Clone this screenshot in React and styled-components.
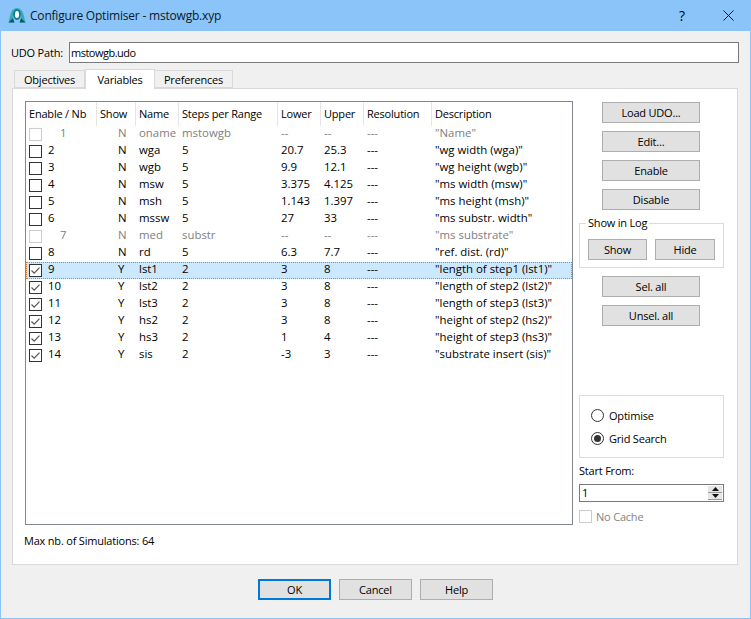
import React from 'react';
import styled, { createGlobalStyle } from 'styled-components';

const Global = createGlobalStyle`
  html, body { margin: 0; padding: 0; background: #f0f0f0; }
  * { box-sizing: border-box; }
  body { font-family: "Open Sans", "Noto Sans", "Liberation Sans", sans-serif; font-size: 11px; letter-spacing: -0.2px; color: #000; }
`;

const Win = styled.div`
  width: 751px; height: 619px; display: flex; flex-direction: column;
  background: #f0f0f0; border: 1px solid #8ac4f8; border-top: 0;
  overflow: hidden;
`;
const TitleBar = styled.div`
  height: 31px; flex: none; background: #8ac4f8; display: flex; align-items: center;
  padding: 0 0 0 8px; margin: 0 -1px;
`;
const TitleText = styled.div`
  font-size: 12px; margin-left: 4px; flex: 1; color: #0c1a26; padding-bottom: 1px;
`;
const HelpMark = styled.div`
  width: 46px; text-align: center; font-size: 14px;
`;
const CloseBox = styled.div`
  width: 46px; height: 31px; display: flex; align-items: center; justify-content: center;
`;
const Content = styled.div`
  flex: 1; display: flex; flex-direction: column; padding: 11px 11px 0 11px;
`;
const PathRow = styled.div`
  display: flex; align-items: center; height: 21px; margin-left: -1px;
`;
const PathLabel = styled.div` width: 58px; flex: none; `;
const PathInput = styled.div`
  flex: 1; height: 21px; background: #fff; border: 1px solid #7a7a7a; padding: 0 1px; line-height: 19px; letter-spacing: -0.5px;
`;
const Tabs = styled.div`
  display: flex; height: 20px; margin: 5px 0 0 2px; align-items: flex-end; position: relative; z-index: 1;
`;
const Tab = styled.div`
  height: ${p => p.$active ? 20 : 18}px; width: ${p => p.$w}px; text-align: center;
  border: 1px solid #d9d9d9; border-left-width: ${p => p.$first || p.$active ? 1 : 0}px;
  border-bottom: ${p => p.$active ? '0' : '1px solid #d9d9d9'};
  background: ${p => p.$active ? '#fff' : '#f0f0f0'};
  line-height: ${p => p.$active ? 19 : 17}px;
  margin-bottom: ${p => p.$active ? -1 : 0}px;
`;
const Panel = styled.div`
  width: 726px; height: 477px; background: #fff; border: 1px solid #d9d9d9;
  display: flex; padding: 12px 0 0 12px;
`;
const LeftCol = styled.div` width: 549px; flex: none; display: flex; flex-direction: column; `;
const Table = styled.div`
  width: 548px; height: 424px; border: 1px solid #828790; background: #fff;
`;
const COLS = '71px 39px 43px 99px 43px 43px 68px 1fr';
const HeaderRow = styled.div`
  display: grid; grid-template-columns: ${COLS}; height: 24px;
`;
const HeadCell = styled.div`
  padding-left: 3px; line-height: 23px; border-right: 1px solid #e5e5e5; white-space: nowrap;
  &:last-child { border-right: 0; }
`;
const Row = styled.div`
  display: grid; grid-template-columns: ${COLS}; height: 17px; align-items: center;
  font-size: 11.4px; letter-spacing: 0;
  color: ${p => p.$dim ? '#808080' : '#000'}; white-space: nowrap; line-height: 14px;
  ${p => p.$sel ? 'background:#cce8ff; outline: 1px dotted #e07a28; outline-offset: -1px;' : ''}
`;
const Cell = styled.div` padding: 0 0 3px 3px; `;
const EnableCell = styled.div` display: flex; align-items: center; padding-left: 3px; `;
const Nb = styled.span` margin-left: ${p => p.$dim ? 18 : 6}px; padding-bottom: 3px; `;
const ShowCell = styled.div` padding: 0 0 3px 21px; `;
const CheckBox = styled.div`
  width: 13px; height: 13px; flex: none; border: 1px solid ${p => p.$dim ? '#cccccc' : '#333'}; background: #fff;
  display: flex; align-items: center; justify-content: center;
`;
const MaxSim = styled.div` margin: 8px 0 0 -1px; line-height: 16px; `;
const RightCol = styled.div`
  width: 146px; margin: 1px 0 0 5px; display: flex; flex-direction: column; align-items: stretch;
`;
const Btn = styled.div`
  width: ${p => p.$w || 98}px; height: 21px; background: #e1e1e1; border: 1px solid #adadad; text-align: center;
  padding-top: 1px; line-height: 18px; flex: none;
`;
const BtnStack = styled.div`
  display: flex; flex-direction: column; gap: 8px; padding-left: 23px;
`;
const GroupBox = styled.div`
  border: 1px solid #dcdcdc; width: 145px; position: relative;
`;
const LogGroup = styled(GroupBox)`
  height: 45px; margin: 13px 0 8px 0; display: flex; gap: 8px; padding: 15px 0 0 8px;
`;
const GroupLegend = styled.div`
  position: absolute; top: -8px; left: 6px; background: #fff; padding: 0 2px; line-height: 14px;
`;
const RadioGroup = styled(GroupBox)`
  height: 63px; margin-top: 69px; padding: 11px 0 0 11px; display: flex; flex-direction: column; gap: 7px;
`;
const RadioRow = styled.div` display: flex; align-items: center; height: 16px; gap: 5px; `;
const Radio = styled.div`
  width: 13px; height: 13px; border-radius: 50%; border: 1px solid #333; background: #fff; display: flex; align-items: center; justify-content: center;
  &::after { content: ""; width: 7px; height: 7px; border-radius: 50%; background: ${p => p.$on ? '#333' : 'transparent'}; }
`;
const StartLabel = styled.div` margin-top: 5px; line-height: 16px; `;
const Spin = styled.div`
  width: 145px; height: 18px; margin-top: 5px; background: #fff; border: 1px solid #7a7a7a; display: flex; justify-content: space-between; padding: 0 1px 0 2px; line-height: 16px;
`;
const SpinBtns = styled.div`
  width: 14px; height: 14px; margin-top: 1px; display: flex; flex-direction: column;
`;
const SpinBtn = styled.div`
  flex: 1; background: #e6e6e6; border-bottom: 1px solid #9a9a9a; display: flex; align-items: center; justify-content: center;
`;
const CacheRow = styled.div`
  display: flex; align-items: center; gap: 4px; margin-top: 7px; color: #838383; height: 14px;
`;
const Footer = styled.div`
  display: flex; justify-content: center; gap: 8px; margin-top: 14px;
`;
const FootBtn = styled(Btn)`
  width: 73px; ${p => p.$def ? 'border: 2px solid #0078d7; padding-top: 0;' : ''}
`;
const Logo = () => (
  <svg width="18" height="18" viewBox="0 0 18 18">
    <path d="M0.5 15.5 C2 11 2 1.5 9 1 C16 1.5 16 11 17.5 15.5 L12.5 15.5 C13.5 11 13 5 9 5 C5 5 4.5 11 5.5 15.5 Z" fill="#3aa9b5" />
    <ellipse cx="9" cy="7.5" rx="3" ry="4.5" fill="#ffffff" stroke="#0e7f8c" strokeWidth="1.8" />
    <path d="M0.5 15.5 L5 11 L6.5 15.5 Z M17.5 15.5 L13 11 L11.5 15.5 Z" fill="#0a5a6b" />
  </svg>
);
const Tick = () => (
  <svg width="11" height="11" viewBox="0 0 11 11"><path d="M1.5 5.5 L4.2 8.2 L9.5 2.6" fill="none" stroke="#555" strokeWidth="1.2" /></svg>
);
const rows = [
  { nb: 1, show: 'N', name: 'oname', steps: 'mstowgb', lo: '--', up: '--', res: '---', d: '"Name"', dim: 1 },
  { nb: 2, show: 'N', name: 'wga', steps: '5', lo: '20.7', up: '25.3', res: '---', d: '"wg width (wga)"' },
  { nb: 3, show: 'N', name: 'wgb', steps: '5', lo: '9.9', up: '12.1', res: '---', d: '"wg height (wgb)"' },
  { nb: 4, show: 'N', name: 'msw', steps: '5', lo: '3.375', up: '4.125', res: '---', d: '"ms width (msw)"' },
  { nb: 5, show: 'N', name: 'msh', steps: '5', lo: '1.143', up: '1.397', res: '---', d: '"ms height (msh)"' },
  { nb: 6, show: 'N', name: 'mssw', steps: '5', lo: '27', up: '33', res: '---', d: '"ms substr. width"' },
  { nb: 7, show: 'N', name: 'med', steps: 'substr', lo: '--', up: '--', res: '---', d: '"ms substrate"', dim: 1 },
  { nb: 8, show: 'N', name: 'rd', steps: '5', lo: '6.3', up: '7.7', res: '---', d: '"ref. dist. (rd)"' },
  { nb: 9, show: 'Y', name: 'lst1', steps: '2', lo: '3', up: '8', res: '---', d: '"length of step1 (lst1)"', on: 1, sel: 1 },
  { nb: 10, show: 'Y', name: 'lst2', steps: '2', lo: '3', up: '8', res: '---', d: '"length of step2 (lst2)"', on: 1 },
  { nb: 11, show: 'Y', name: 'lst3', steps: '2', lo: '3', up: '8', res: '---', d: '"length of step3 (lst3)"', on: 1 },
  { nb: 12, show: 'Y', name: 'hs2', steps: '2', lo: '3', up: '8', res: '---', d: '"height of step2 (hs2)"', on: 1 },
  { nb: 13, show: 'Y', name: 'hs3', steps: '2', lo: '1', up: '4', res: '---', d: '"height of step3 (hs3)"', on: 1 },
  { nb: 14, show: 'Y', name: 'sis', steps: '2', lo: '-3', up: '3', res: '---', d: '"substrate insert (sis)"', on: 1 },
];
const heads = ['Enable / Nb', 'Show', 'Name', 'Steps per Range', 'Lower', 'Upper', 'Resolution', 'Description'];

export default function App() {
  return (
    <>
      <Global />
      <Win>
        <TitleBar>
          <Logo />
          <TitleText>Configure Optimiser - mstowgb.xyp</TitleText>
          <HelpMark>?</HelpMark>
          <CloseBox>
            <svg width="11" height="11" viewBox="0 0 11 11"><path d="M0.5 0.5 L10.5 10.5 M10.5 0.5 L0.5 10.5" stroke="#111" strokeWidth="1" fill="none" /></svg>
          </CloseBox>
        </TitleBar>
        <Content>
          <PathRow>
            <PathLabel>UDO Path:</PathLabel>
            <PathInput>mstowgb.udo</PathInput>
          </PathRow>
          <Tabs>
            <Tab $w={71} $first>Objectives</Tab>
            <Tab $w={70} $active>Variables</Tab>
            <Tab $w={78}>Preferences</Tab>
          </Tabs>
          <Panel>
            <LeftCol>
              <Table>
                <HeaderRow>
                  {heads.map(h => <HeadCell key={h}>{h}</HeadCell>)}
                </HeaderRow>
                {rows.map(r => (
                  <Row key={r.nb} $dim={r.dim} $sel={r.sel}>
                    <EnableCell>
                      <CheckBox $dim={r.dim}>{r.on ? <Tick /> : null}</CheckBox>
                      <Nb $dim={r.dim}>{r.nb}</Nb>
                    </EnableCell>
                    <ShowCell>{r.show}</ShowCell>
                    <Cell>{r.name}</Cell>
                    <Cell>{r.steps}</Cell>
                    <Cell>{r.lo}</Cell>
                    <Cell>{r.up}</Cell>
                    <Cell>{r.res}</Cell>
                    <Cell>{r.d}</Cell>
                  </Row>
                ))}
              </Table>
              <MaxSim>Max nb. of Simulations: 64</MaxSim>
            </LeftCol>
            <RightCol>
              <BtnStack>
                <Btn>Load UDO...</Btn>
                <Btn>Edit...</Btn>
                <Btn>Enable</Btn>
                <Btn>Disable</Btn>
              </BtnStack>
              <LogGroup>
                <GroupLegend>Show in Log</GroupLegend>
                <Btn $w={59}>Show</Btn>
                <Btn $w={60}>Hide</Btn>
              </LogGroup>
              <BtnStack>
                <Btn>Sel. all</Btn>
                <Btn>Unsel. all</Btn>
              </BtnStack>
              <RadioGroup>
                <RadioRow><Radio />Optimise</RadioRow>
                <RadioRow><Radio $on />Grid Search</RadioRow>
              </RadioGroup>
              <StartLabel>Start From:</StartLabel>
              <Spin>
                <span>1</span>
                <SpinBtns>
                  <SpinBtn><svg width="7" height="4" viewBox="0 0 7 4"><path d="M3.5 0 L7 4 L0 4 Z" fill="#111" /></svg></SpinBtn>
                  <SpinBtn><svg width="7" height="4" viewBox="0 0 7 4"><path d="M0 0 L7 0 L3.5 4 Z" fill="#111" /></svg></SpinBtn>
                </SpinBtns>
              </Spin>
              <CacheRow><CheckBox $dim />No Cache</CacheRow>
            </RightCol>
          </Panel>
          <Footer>
            <FootBtn $def>OK</FootBtn>
            <FootBtn>Cancel</FootBtn>
            <FootBtn>Help</FootBtn>
          </Footer>
        </Content>
      </Win>
    </>
  );
}
